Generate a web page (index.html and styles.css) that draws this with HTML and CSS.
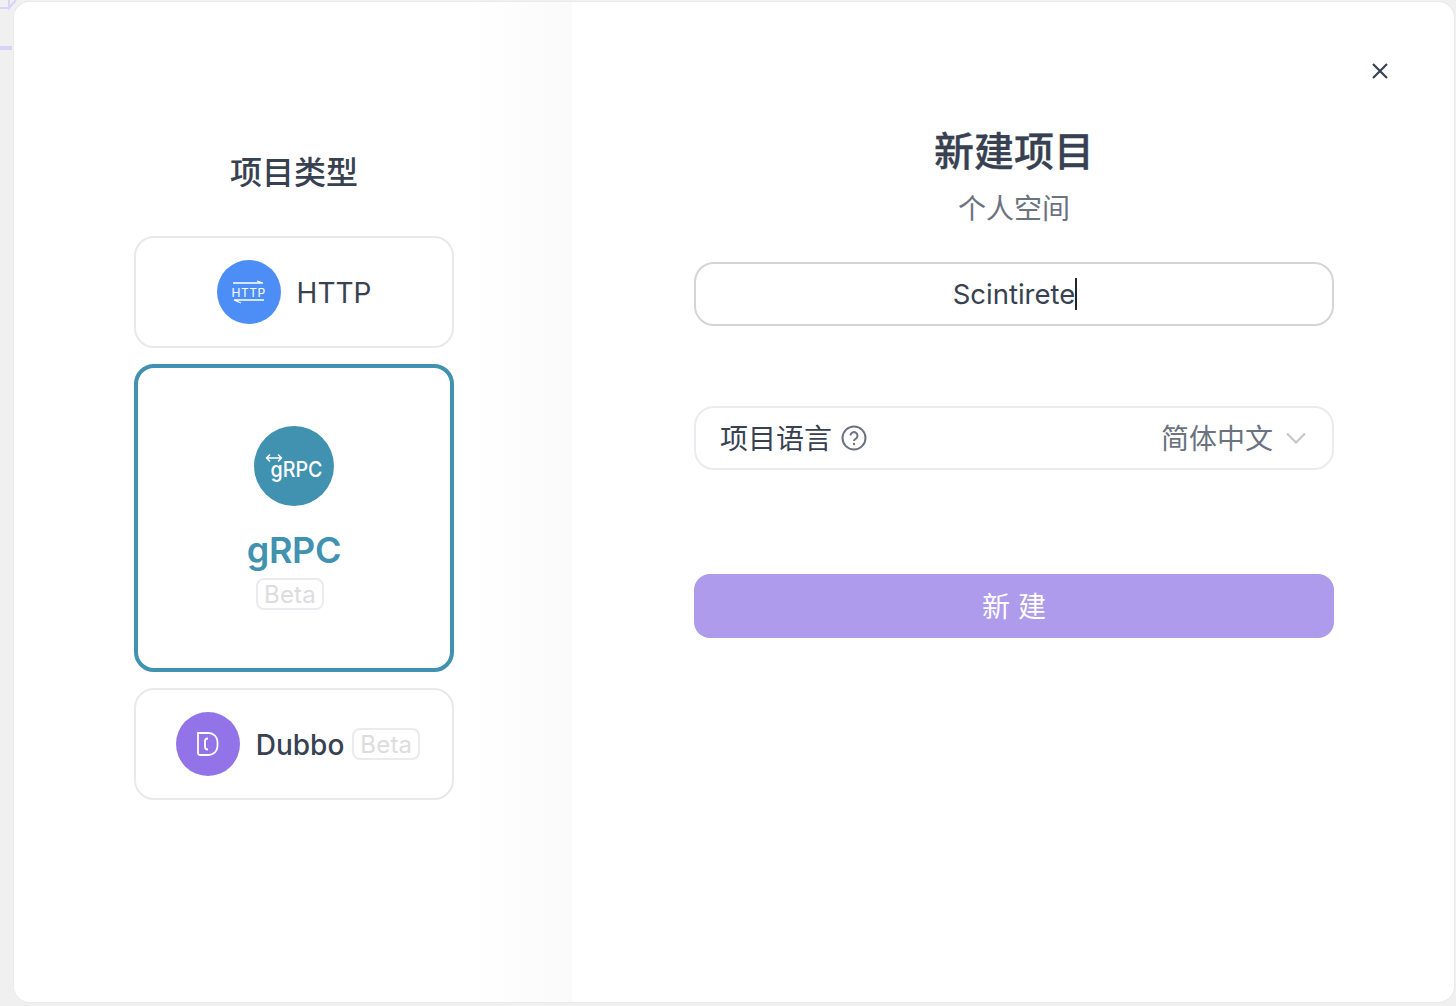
FILE: index.html
```html
<!doctype html>
<html lang="zh-CN">
<head>
    <meta charset="utf-8"/>
    <title>新建项目</title>
    <link rel="stylesheet" href="styles.css">
</head>
<body>
<div class="backdrop-mark"></div>
<svg class="backdrop-glyph" width="20" height="12" viewBox="0 0 20 12"><path d="M0 8h9M9 0v8l7-8" fill="none" stroke="#d9d3f7" stroke-width="2"/></svg>
<div class="modal">
    <section class="types">
        <h2 class="types-title">项目类型</h2>
        <div class="type-card">
            <span class="type-icon icon-http">
                <svg width="34" height="26" viewBox="0 0 34 26">
                    <path d="M1 4h30M25 2l6 2M2 21h30M2 21l7 3" fill="none" stroke="#fff" stroke-width="1.300"/>
                    <text x="16.500" y="17.500" text-anchor="middle" class="http-text">HTTP</text>
                </svg>
            </span>
            <span class="type-name">HTTP</span>
        </div>
        <div class="type-card type-card-active">
            <span class="type-icon-big">
                <svg width="72" height="36" viewBox="0 0 72 36">
                    <path d="M8.500 10h15M12 6.500L8.500 10 12 13.500M20 6.500l3.500 3.500-3.500 3.500" fill="none" stroke="#fff" stroke-width="1.400"/>
                    <text x="12.500" y="29" textLength="52" lengthAdjust="spacingAndGlyphs" class="grpc-text">gRPC</text>
                </svg>
            </span>
            <span class="active-name">gRPC</span>
            <span class="beta">Beta</span>
        </div>
        <div class="type-card card-dubbo">
            <span class="type-icon icon-dubbo">
                <svg width="24" height="24" viewBox="0 0 24 24">
                    <path d="M2 1h10.500a9 9 0 0 1 9 9v4a9 9 0 0 1-9 9H4a2 2 0 0 1-2-2z" fill="none" stroke="#fff" stroke-width="1.800"/>
                    <path d="M12 6.500Q9 6.500 9 9v6Q9 17.500 12 17.500" fill="none" stroke="#fff" stroke-width="1.800"/>
                </svg>
            </span>
            <span class="type-name dubbo-name">Dubbo</span>
            <span class="beta">Beta</span>
        </div>
    </section>
    <section class="form-side">
        <svg class="close" width="18" height="18" viewBox="0 0 18 18"><path d="M2 2l14 14M16 2L2 16" stroke="#374151" stroke-width="2.200" fill="none"/></svg>
        <h1 class="form-title">新建项目</h1>
        <p class="form-sub">个人空间</p>
        <div class="name-input"><span>Scintirete</span><i class="caret"></i></div>
        <div class="lang-select">
            <span class="lang-label">项目语言</span>
            <svg class="help" width="26" height="26" viewBox="0 0 26 26">
                <circle cx="13" cy="13" r="11.500" fill="none" stroke="#6b7280" stroke-width="2"/>
                <path d="M9.500 10.500a3.500 3.500 0 1 1 5.500 3c-1.300.8-2 1.300-2 2.500" fill="none" stroke="#6b7280" stroke-width="2"/>
                <circle cx="13" cy="19" r="1.200" fill="#6b7280"/>
            </svg>
            <span class="lang-value">简体中文</span>
            <svg class="chevron" width="20" height="12" viewBox="0 0 20 12"><path d="M1 1.500l9 9 9-9" fill="none" stroke="#c4c5c9" stroke-width="2"/></svg>
        </div>
        <button class="submit">新 建</button>
    </section>
</div>
</body>
</html>
```

FILE: styles.css
```css
* {
    box-sizing: border-box;
}
html, body {
    height: 100%;
}
body {
    margin: 0;
    padding: 2px 2px 4px 14px;
    overflow: hidden;
    background: #f0f0f1;
    font-family: Inter, "Noto Sans CJK SC", sans-serif;
    color: #374151;
}
.backdrop-mark {
    position: absolute;
    left: 0;
    top: 46px;
    width: 12px;
    height: 4px;
    background: #d9d3f7;
}
.backdrop-glyph {
    position: absolute;
    left: 0;
    top: 0;
}
.modal {
    position: relative;
    display: flex;
    height: 1000px;
    background: #fff;
    border-radius: 16px;
    overflow: hidden;
    box-shadow: 0 0 0 1px #e9e9ee;
}
.types {
    width: 558px;
    padding-top: 149px;
    display: flex;
    flex-direction: column;
    align-items: center;
    gap: 16px;
    padding-left: 2px;
    background: linear-gradient(to right, #fff 82%, #fafafa);
}
.types-title {
    margin: 0 0 25px;
    font-size: 32px;
    line-height: 44px;
    font-weight: 500;
}
.type-card {
    width: 320px;
    height: 112px;
    display: flex;
    align-items: center;
    justify-content: center;
    background: #fff;
    border: 2px solid #e9e9ec;
    border-radius: 20px;
}
.card-dubbo {
    padding-left: 8px;
}
.type-card-active {
    height: 308px;
    flex-direction: column;
    justify-content: flex-start;
    padding-top: 58px;
    border: 4px solid #4191b0;
}
.type-icon {
    width: 64px;
    height: 64px;
    border-radius: 50%;
    display: flex;
    align-items: center;
    justify-content: center;
    flex-shrink: 0;
}
.icon-http {
    background: #4c8ef5;
}
.icon-dubbo {
    background: #9274e8;
}
.http-text {
    font-size: 12px;
    letter-spacing: 0.500px;
    fill: #fff;
    font-family: Inter, sans-serif;
}
.grpc-text {
    font-size: 22px;
    font-weight: 500;
    fill: #fff;
    font-family: Inter, sans-serif;
}
.type-icon-big {
    width: 80px;
    height: 80px;
    border-radius: 50%;
    background: #4191b0;
    display: flex;
    align-items: center;
    justify-content: center;
}
.type-name {
    margin-left: 16px;
    padding-top: 2px;
    font-size: 28px;
    line-height: 40px;
}
.dubbo-name {
    font-weight: 500;
}
.active-name {
    margin-top: 21px;
    font-size: 36px;
    line-height: 46px;
    font-weight: 600;
    letter-spacing: -0.300px;
    color: #4191b0;
}
.beta {
    display: block;
    margin-left: 8px;
    padding: 0 6px;
    height: 32px;
    font-size: 24px;
    line-height: 29px;
    letter-spacing: 0.200px;
    color: #dcdcde;
    border: 2px solid #ebebef;
    border-radius: 8px;
}
.type-card-active .beta {
    margin: 5px 8px 0 0;
    line-height: 30px;
}
.form-side {
    position: relative;
    flex: 1;
    padding: 122px 0 0 2px;
    display: flex;
    flex-direction: column;
    align-items: center;
}
.close {
    position: absolute;
    left: 799px;
    top: 60px;
}
.form-title {
    margin: 0;
    font-size: 40px;
    line-height: 56px;
    font-weight: 500;
    -webkit-text-stroke: 0.300px #374151;
}
.form-sub {
    margin: 9px 0 0;
    font-size: 28px;
    line-height: 40px;
    color: #6b7280;
}
.name-input {
    margin-top: 33px;
    padding-left: 2px;
    width: 640px;
    height: 64px;
    display: flex;
    align-items: center;
    justify-content: center;
    font-size: 27.500px;
    border: 2px solid #d4d5d8;
    border-radius: 20px;
}
.caret {
    width: 2px;
    height: 32px;
    background: #1f2430;
}
.lang-select {
    margin-top: 80px;
    width: 640px;
    height: 64px;
    display: flex;
    align-items: center;
    padding: 0 26px 0 24px;
    font-size: 28px;
    border: 2px solid #ebebef;
    border-radius: 20px;
}
.lang-label,
.lang-value {
    position: relative;
    top: -1px;
}
.help {
    margin-left: 9px;
}
.lang-value {
    margin-left: auto;
    color: #6b7280;
}
.chevron {
    margin-left: 13px;
}
.submit {
    margin-top: 104px;
    width: 640px;
    height: 64px;
    padding-bottom: 3px;
    border: 0;
    border-radius: 16px;
    background: #ae9bec;
    color: #fff;
    font-family: inherit;
    font-size: 28px;
}
```
